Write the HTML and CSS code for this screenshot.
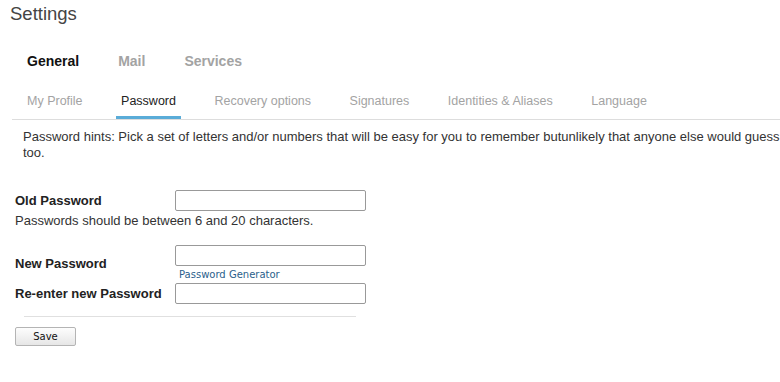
FILE: index.html
```html
<!DOCTYPE html>
<html lang="en">
<head>
    <meta charset="UTF-8">
    <meta name="viewport" content="width=device-width, initial-scale=1.0">
    <title>Settings - Password</title>
    <link rel="stylesheet" href="styles.css">
</head>
<body>

<h1 class="page-title">Settings</h1>

<div class="main-tabs">
    <a href="#" class="main-tab active">General</a>
    <a href="#" class="main-tab">Mail</a>
    <a href="#" class="main-tab">Services</a>
</div>

<div class="sub-tabs">
    <a href="#" class="sub-tab">My Profile</a>
    <a href="#" class="sub-tab active">Password</a>
    <a href="#" class="sub-tab">Recovery options</a>
    <a href="#" class="sub-tab">Signatures</a>
    <a href="#" class="sub-tab">Identities &amp; Aliases</a>
    <a href="#" class="sub-tab">Language</a>
</div>

<p class="hints">Password hints: Pick a set of letters and/or numbers that will be easy for you to remember butunlikely that anyone else would guess too.</p>

<form class="password-form">
    <div class="form-row">
        <label for="oldPassword">Old Password</label>
        <input type="password" id="oldPassword">
    </div>
    <p class="form-note">Passwords should be between 6 and 20 characters.</p>

    <div class="form-row new-row">
        <label for="newPassword">New Password</label>
        <div class="field">
            <input type="password" id="newPassword">
            <a href="#" class="generator">Password Generator</a>
        </div>
    </div>
    <div class="form-row">
        <label for="confirmPassword">Re-enter new Password</label>
        <input type="password" id="confirmPassword">
    </div>

    <hr class="divider">

    <button type="button" class="save-button">Save</button>
</form>

</body>
</html>
```

FILE: styles.css
```css
html, body {
    overflow-x: hidden;
}

body {
    margin: 0;
    font-family: "Liberation Sans", Arial, sans-serif;
    font-size: 13px;
    color: #333;
    background-color: #fff;
}

a {
    text-decoration: none;
}

.page-title {
    margin: 3px 0 0;
    padding-left: 10px;
    font-size: 18.5px;
    line-height: 22px;
    font-weight: normal;
    color: #444;
}

.main-tabs {
    display: flex;
    gap: 39px;
    margin-top: 28px;
    padding-left: 27px;
}

.main-tab {
    font-size: 14px;
    line-height: 17px;
    font-weight: bold;
    color: #a3a3a3;
}

.main-tab.active {
    color: #111;
}

.sub-tabs {
    display: flex;
    gap: 28.5px;
    margin: 24px 0 0 12px;
    padding-left: 10px;
    border-bottom: 1px solid #ddd;
}

.sub-tab {
    padding: 0 5px 7px;
    font-size: 12.5px;
    line-height: 15px;
    color: #a3a3a3;
    border-bottom: 3px solid transparent;
}

.sub-tab.active {
    color: #222;
    border-bottom-color: #5aacd8;
}

.hints {
    width: 762px;
    margin: 9px 0 0;
    padding-left: 23px;
    line-height: 16px;
    color: #333;
}

.password-form {
    margin-top: 30px;
    padding-left: 15px;
}

.form-row {
    display: flex;
    align-items: center;
}

.form-row label {
    width: 160px;
    font-weight: bold;
    color: #222;
}

.form-row input {
    width: 191px;
    height: 21px;
    margin: 0;
    padding: 2px 4px;
    border: 1px solid #999;
    border-radius: 2px;
    box-sizing: border-box;
    font-size: 13px;
}

.form-row:first-child {
    margin-top: -1px;
}

.form-note {
    margin: 2px 0 0;
    line-height: 15px;
    color: #333;
}

.new-row {
    margin-top: 17px;
}

.field {
    display: flex;
    flex-direction: column;
}

.generator {
    margin: 2px 0 0 4px;
    font-family: "DejaVu Sans", Verdana, sans-serif;
    font-size: 10px;
    line-height: 13px;
    color: #2b5f8c;
}

.new-row + .form-row {
    margin-top: 2px;
}

.divider {
    width: 332px;
    margin: 12px 0 0 9px;
    border: none;
    border-top: 1px solid #e0e0e0;
}

.save-button {
    display: block;
    width: 61px;
    height: 19px;
    margin-top: 10px;
    padding: 0;
    font-family: "DejaVu Sans", Verdana, sans-serif;
    font-size: 10px;
    color: #111;
    background: linear-gradient(#fdfdfd, #e6e6e6);
    border: 1px solid #b4b4b4;
    border-radius: 2px;
}
```
